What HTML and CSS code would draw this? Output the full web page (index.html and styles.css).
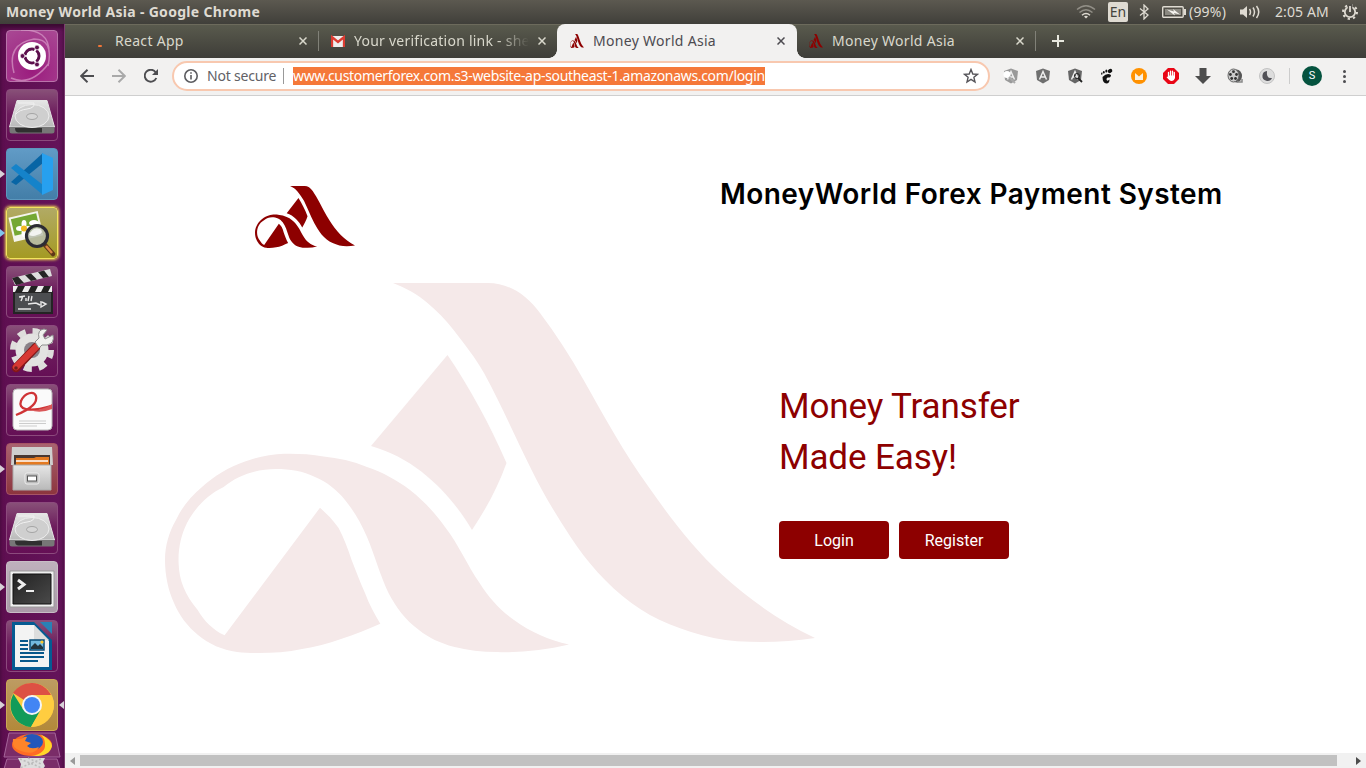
FILE: index.html
```html
<!DOCTYPE html>
<html lang="en">
<head>
<meta charset="utf-8">
<title>Money World Asia</title>
<link rel="stylesheet" href="styles.css">
</head>
<body>
<svg class="defs" width="0" height="0">
  <defs>
    <linearGradient id="steel" x1="0" y1="0" x2="0" y2="1"><stop offset="0" stop-color="#e6e6e6"/><stop offset="1" stop-color="#b9b9b9"/></linearGradient>
    <linearGradient id="dark" x1="0" y1="0" x2="1" y2="1"><stop offset="0" stop-color="#222"/><stop offset="1" stop-color="#4a4a4a"/></linearGradient>
    <symbol id="brand" viewBox="165 283 650 370" preserveAspectRatio="none">
      <path d="M393 283H488C508 283 526 294 540 313C556 334 570 356 583.6 380C604 416 624 453 648.7 487C671 519 694 549 722.4 575C751 601 780 621 815 638C797 641 779 642 761.5 642C745 642 729 641 713.7 638C683 631 654 620 631.4 603C606 584 587 562 570.6 537C556 515 543 493 531.6 470C515 437 501 404 484 373C475 357 465 345 453.6 330C446 320 437 311 427.5 303C417 294 406 288 393 283Z"/>
      <path d="M447.5 355C470 388 490 425 506.500 463C498 487 486 509 472 530C452 496 418 459 371 446Z"/>
      <path d="M569 644.500C549 640 530 632 514 620C500 610 489 598 479.600 583C467 565 459 545 445 527C435 513 423 500 410 490C397 480 382 472 367 467C353 461 338 458 323.500 456.500C311 454 297 453.500 284.400 453.700C271 454 257 457 245 461.500C229 467 214 476 202 487C191 496 182 507 176 520C169 532 165 546 165 560C165 575 168 590 174 603C179 615 187 626 198 635C209 644 222 650 237 652C244 653 251 653 258.400 653C273 653 288 652 302 649C315 647 328 643.500 341 639C355 634.500 368 629 380.300 623.700C374 613 369 604 365 593C360 582 356 571 351.600 560C348 549 344 538 338.600 528C333 520 327 514 320 507.700L224.600 635.300C213 630 204 621 197.700 610C185 595 179 580 178.600 563C178 549 181 535 187 523C195 508 207 495 223.700 487C238 475 256 469 276 469C290 469 303 471 315 477C327 482 337 490 345 500C354 511 361 523 367 537C375 556 380 575 388.500 593C396 607 405 620 419 630C429 638 441 643.500 453.600 646.700C467 650 482 652 497 652C521 653 545 650 569 644.500Z"/>
    </symbol>
    <symbol id="drive" viewBox="0 0 52 52">
      <path d="M11 11.500H41L48.500 38H3.500Z" fill="url(#steel)" stroke="#e4e4e4"/>
      <path d="M3.500 38H48.500V42Q48.500 44.500 46 44.500H6Q3.500 44.500 3.500 42Z" fill="#777"/>
      <path d="M9 39H36V43.500H12Q9 43 9 39Z" fill="#303030"/>
      <ellipse cx="26" cy="27" rx="17" ry="11.500" fill="#cfcfcf" stroke="#ededed"/>
      <ellipse cx="26" cy="27.500" rx="5.500" ry="3" fill="#d6d6d6" stroke="#a5a5a5"/>
      <path d="M12 14H28Q29 19 21 20T10 25" fill="none" stroke="#f1f1f1"/>
    </symbol>
    <symbol id="shield" viewBox="0 0 16 16"><path d="M8 .5L15 3L14 12L8 15.500L2 12L1 3Z"/><path d="M4.500 11.500L8 3.500L11.500 11.500M6 9H10" fill="none" stroke="#eee" stroke-width="1.500"/></symbol>
    <symbol id="close" viewBox="0 0 8 8"><path d="M.5.5L7.500 7.500M7.500.5L.5 7.500" fill="none" stroke="currentColor" stroke-width="1.500"/></symbol>
  </defs>
</svg>

<header class="panel">
  <span class="window-title">Money World Asia - Google Chrome</span>
  <div class="indicators">
    <svg class="wifi" width="20" height="16" viewBox="0 0 20 16" fill="none" stroke-width="1.500"><path d="M1 5.500Q10-2 19 5.500M3.500 8.500Q10 3 16.500 8.500" stroke="#918e86"/><path d="M6 11.200Q10 7.800 14 11.200" stroke="#dfdbd2"/><path d="M8 12.500Q10 11 12 12.500L10 14.500Z" fill="#dfdbd2"/></svg>
    <span class="lang">En</span>
    <svg class="bt" width="10" height="16" viewBox="0 0 10 16" fill="none" stroke="#dfdbd2" stroke-width="1.300"><path d="M1 4.500L9 11L5 15V1L9 5L1 11.500"/></svg>
    <svg class="battery" width="24" height="14" viewBox="0 0 24 14"><rect x=".7" y="1.700" width="20.500" height="10.600" rx="1" fill="none" stroke="#dfdbd2" stroke-width="1.400"/><path d="M22 4h2v6h-2z" fill="#dfdbd2"/><path d="M3 4H19V10H3Z" fill="#8b8981"/><path d="M5 4.500L12 6.500L11 4L18 9.500L12 8L13 10.500Z" fill="#f5f3ee"/></svg>
    <span class="percent">(99%)</span>
    <svg class="volume" width="20" height="16" viewBox="0 0 20 16"><path d="M0 5.500H3L7 2V14L3 10.500H0Z" fill="#dfdbd2"/><path d="M9.500 5Q11.500 8 9.500 11M13 3.500Q16 8 13 12.500M16.500 2Q21 8 16.500 14" fill="none" stroke="#dfdbd2" stroke-width="1.500"/></svg>
    <span class="clock">2:05 AM</span>
    <svg class="cog" width="16" height="16" viewBox="0 0 16 16" fill="none" stroke="#dfdbd2"><circle cx="8" cy="8" r="5.200" stroke-width="1.800"/><circle cx="8" cy="8" r="7" stroke-width="2" stroke-dasharray="2.300 3.200"/><path d="M8 0V8" stroke="#504e48" stroke-width="4.500"/><path d="M8 2V8" stroke-width="1.800"/></svg>
  </div>
</header>

<div class="desktop">
  <nav class="launcher">
    <div class="tile ubuntu"><svg viewBox="0 0 52 52"><path d="M8 43Q0 14 28 9Q48 9 42 36M5 48Q25 57 43 33M15 0Q43-1 43 22" fill="none" stroke="#d79ac8" stroke-width="1.500" opacity=".7"/><circle cx="26" cy="26" r="14" fill="#fff"/><circle cx="26" cy="26" r="7" fill="none" stroke="#5c0f4d" stroke-width="3"/><path d="M26 26L15 26M26 26L31 17M26 26L31 35" stroke="#fff" stroke-width="1.600"/><circle cx="26" cy="26" r="5.300" fill="#fff"/><g fill="#5c0f4d" stroke="#fff" stroke-width=".7"><circle cx="16.500" cy="26" r="2.400"/><circle cx="31" cy="17.500" r="2.400"/><circle cx="31" cy="34.500" r="2.400"/></g></svg></div>
    <div class="tile"><svg><use href="#drive"/></svg></div>
    <div class="tile code running"><svg viewBox="0 0 52 52"><path d="M5 34L10 37L37 15V5Z" fill="#0865a5"/><path d="M5 20L10 16L37 37V47Z" fill="#1583ca"/><path d="M36 5L47 10V42L36 47Z" fill="#27a0ef"/></svg></div>
    <div class="tile viewer active running"><svg viewBox="0 0 52 52"><g transform="rotate(-13 20 20)"><path d="M5 7H35V32H5Z" fill="#f4f4ec"/><path d="M7 9H33V26H7Z" fill="#75a833"/></g><g fill="#fff"><ellipse cx="18" cy="17" rx="2.500" ry="4"/><ellipse cx="18" cy="26" rx="2.500" ry="4"/><ellipse cx="14" cy="21.500" rx="4" ry="2.500"/><ellipse cx="22" cy="21.500" rx="4" ry="2.500"/><ellipse cx="28" cy="16" rx="5" ry="3"/></g><circle cx="18" cy="21.500" r="3" fill="#f1ba20"/><path d="M39 38L47 47" stroke="#603818" stroke-width="4.500" stroke-linecap="round"/><path d="M40 39L46 46" stroke="#db8a43" stroke-width="2.500"/><circle cx="31" cy="29" r="10.500" fill="#b8beae" fill-opacity=".85" stroke="#2c2c33" stroke-width="3.200"/><path d="M23 28Q27 19 34 22Q39 26 31 28Q27 30 23 28" fill="#fff" opacity=".8"/></svg></div>
    <div class="tile"><svg viewBox="0 0 52 52"><path d="M8 26H46V47H8Z" fill="#4b4d50" stroke="#242424" stroke-width="2"/><path d="M7 20H46V26H7Z" fill="#eee"/><path d="M12 20H19L16 26H9ZM25 20H32L29 26H22ZM38 20H45L42 26H35Z" fill="#222"/><path d="M6 12L44 3L46 10L9 19Z" fill="#ddd"/><path d="M6 12L12 10.500L18 17L10 19ZM19 9L25 7.500L31 13.500L25 15ZM32 6L38 4.500L43 11L37 12Z" fill="#252525"/><path d="M13 31L19 30M17 30L15 35M20 32V35M23 30L22 35M26 30L25 35M22 38L30 37M30 37L34 39M35 35V41L40 38L36 36M12 43H25" stroke="#e8e8e8" stroke-width="1.400" fill="none"/></svg></div>
    <div class="tile"><svg viewBox="0 0 52 52"><circle cx="26" cy="25" r="15" fill="#e3e3e1" stroke="#e3e3e1" stroke-width="3"/><circle cx="26" cy="25" r="19" fill="none" stroke="#dededc" stroke-width="6" stroke-dasharray="8 6.920"/><circle cx="26" cy="25" r="8" fill="#888188"/><path d="M10 43L30 22" stroke="#851818" stroke-width="8.500" stroke-linecap="round"/><path d="M10 42L30 22" stroke="#d73833" stroke-width="6.500" stroke-linecap="round"/><path d="M29 17L33 13Q31 5 38 4L41 5L37 10L39 14L47 10Q49 18 41 20L36 20L33 23Z" fill="#f0f0ee" stroke="#8f8f8f"/><circle cx="10" cy="43" r="1.800" fill="#702020"/></svg></div>
    <div class="tile"><svg viewBox="0 0 52 52"><rect x="7" y="5" width="39" height="41" rx="4" fill="#fafafa" stroke="#b9b9b9"/><path d="M10 31C25 25 32 19 30 12C28 7 19 8 15 17C12 25 21 29 45 22" fill="none" stroke="#cf3436" stroke-width="2.300"/><path d="M24 26Q36 27 46 20V25Q34 30 24 26" fill="#da5758"/><path d="M13 37H40M13 39.500H40M13 42H31" stroke="#ccc"/></svg></div>
    <div class="tile files running"><svg viewBox="0 0 52 52"><path d="M6 4H46L47 22H5Z" fill="#cfcfcf"/><path d="M8 12H44V24H8Z" fill="#493832"/><path d="M10 15H28L30 14H43V24H10Z" fill="#e47a21"/><path d="M10 18H42" stroke="#fff" stroke-width="1.500"/><path d="M7 22H45V47H7Z" fill="url(#steel)" stroke="#aaa"/><rect x="19" y="30" width="14" height="11" rx="2" fill="#bcbcbc" stroke="#eee"/><rect x="21.500" y="33" width="9" height="5" fill="#fff" stroke="#555"/></svg></div>
    <div class="tile"><svg><use href="#drive"/></svg></div>
    <div class="tile terminal running"><svg viewBox="0 0 52 52"><path d="M4 10H48V46H4Z" fill="#f0f0f0" stroke="#999"/><path d="M7 13H45V43H7Z" fill="url(#dark)" stroke="#111"/><path d="M12 19L18 23.500L12 28" fill="none" stroke="#eee" stroke-width="3"/><path d="M20 30H28" stroke="#eee" stroke-width="2"/></svg></div>
    <div class="tile"><svg viewBox="0 0 52 52"><path d="M34 2H46V14Z" fill="#2981b5"/><path d="M6 2H28L46 20V50H6Z" fill="#055b92"/><path d="M9 5H28L43 21V47H9Z" fill="#f3f3f3"/><path d="M28 5V20H43Z" fill="#ddd"/><path d="M14 21H22M14 25H22M14 29H22M14 33H38M14 37H38M14 41H32" stroke="#07588b" stroke-width="2"/><path d="M24 20H38V30H24Z" fill="#73b9dd" stroke="#0b4d77" stroke-width="1.500"/><path d="M25 29V27L29 23L32 26L34 24L37 27V29Z" fill="#23343c"/><circle cx="36" cy="22" r="1.600" fill="#ffc928"/></svg></div>
    <div class="tile chrome-app running focused"><svg viewBox="0 0 52 52"><circle cx="26" cy="26" r="22" fill="#ffcd40"/><path d="M26 26L7 14A22 22 0 0 1 45 16Z" fill="#dd5144"/><path d="M7.500 15A22 22 0 0 0 25 48L34 32L26 26L17 30Z" fill="#119b59"/><path d="M26 16H45Q49 22 47.500 30Q44 46 25 48L35 31Z" fill="#ffcd40"/><circle cx="26" cy="26" r="10" fill="#f5f5f5"/><circle cx="26" cy="26" r="8" fill="#4285f4"/></svg></div>
    <div class="folded"><svg viewBox="0 0 58 37"><path d="M6 1H52L57 25H1Z" fill="#7a2c68" stroke="#a5659a"/><path d="M4 27H54L57 37H1Z" fill="#7a2c68" stroke="#a5659a"/><ellipse cx="29" cy="13" rx="20" ry="11" fill="#ff6b24"/><path d="M37 2Q49 8 49 14Q47 25 29 24Q43 21 42 12Q42 6 37 2" fill="#ffd629"/><ellipse cx="29" cy="10" rx="11" ry="8" fill="#2457ba"/><path d="M10 7L18 7Q22 4 24 5L22 9L28 11L24 14Q28 18 36 15Q31 24 18 19Q8 16 10 7" fill="#ff8429"/><path d="M15 26H42L40 30L42 34L40 37H17L18 32Z" fill="#ddd"/><path d="M17 27L39 36M38 27L17 36M25 26L38 32" stroke="#bbb" stroke-width="1.500" stroke-dasharray="2 2"/></svg></div>
  </nav>

  <main class="browser">
    <div class="tabs">
      <div class="tab first"><span class="favicon spinner"><i></i></span><span class="tab-name">React App</span><svg class="x"><use href="#close"/></svg></div>
      <div class="tab second"><svg class="favicon" viewBox="0 0 14 14"><path d="M0 2H14V13H0Z" fill="#eee"/><path d="M1 13V3L7 8L13 3V13" fill="none" stroke="#dc3c32" stroke-width="2.300"/></svg><span class="tab-name fade">Your verification link - she</span><svg class="x"><use href="#close"/></svg></div>
      <div class="tab current"><svg class="favicon brand"><use href="#brand"/></svg><span class="tab-name">Money World Asia</span><svg class="x"><use href="#close"/></svg></div>
      <div class="tab last"><svg class="favicon brand"><use href="#brand"/></svg><span class="tab-name">Money World Asia</span><svg class="x"><use href="#close"/></svg></div>
      <svg class="plus" width="12" height="12" viewBox="0 0 12 12"><path d="M6 0V12M0 6H12" stroke="#e8e8df" stroke-width="2"/></svg>
    </div>
    <div class="toolbar">
      <div class="nav-buttons">
        <svg width="14" height="14" viewBox="0 0 14 14" fill="none" stroke="#4d4d50" stroke-width="1.900"><path d="M14 7H1M7.500.8L1.200 7L7.500 13.200"/></svg>
        <svg width="14" height="14" viewBox="0 0 14 14" fill="none" stroke="#a9a9a9" stroke-width="1.900"><path d="M0 7H13M6.500.8L12.800 7L6.500 13.200"/></svg>
        <svg width="14" height="14" viewBox="0 0 14 14"><path d="M12.300 9A6 6 0 1 1 11.600 3.200" fill="none" stroke="#4d4d50" stroke-width="1.900"/><path d="M14 0V6H8Z" fill="#4d4d50"/></svg>
      </div>
      <div class="address">
        <svg width="14" height="14" viewBox="0 0 14 14" fill="none" stroke="#5c5c60" stroke-width="1.600"><circle cx="7" cy="7" r="6.200"/><path d="M7 6V10.500M7 3.200V4.800"/></svg>
        <span class="security">Not secure</span><span class="rule"></span>
        <span class="url">www.customerforex.com.s3-website-ap-southeast-1.amazonaws.com/login</span>
        <svg class="star" width="16" height="16" viewBox="0 0 16 16"><path d="M8 1.500L9.800 6L14.500 6.300L10.900 9.300L12 14L8 11.400L4 14L5.100 9.300L1.500 6.300L6.200 6Z" fill="none" stroke="#555459" stroke-width="1.400"/></svg>
      </div>
      <div class="extensions">
        <svg viewBox="0 0 16 16"><use href="#shield" fill="#999"/><circle cx="4" cy="6.500" r="3.500" fill="#fff"/><path d="M6 9L12 15" stroke="#aaa" stroke-width="2"/></svg>
        <svg><use href="#shield" fill="#6f6f6f"/></svg>
        <svg viewBox="0 0 16 16"><use href="#shield" fill="#666"/><circle cx="10" cy="8" r="2.500" fill="none" stroke="#222"/><path d="M11 10L15 14" stroke="#222" stroke-width="1.800"/></svg>
        <svg viewBox="0 0 16 16" fill="#111"><ellipse cx="11" cy="3" rx="2.400" ry="2" transform="rotate(-25 11 3)"/><ellipse cx="7.300" cy="3" rx="1" ry="1.500"/><ellipse cx="4.800" cy="4.200" rx=".9" ry="1.300"/><ellipse cx="2.800" cy="5.700" rx=".7" ry="1.100"/><path d="M3.500 9Q8 4.500 12 7Q12 10 8.500 9.500Q6.500 11 8 12.500Q9 13 10.500 11.500Q10.500 15.500 7.500 15.500Q3.500 15 3.500 9Z"/></svg>
        <svg viewBox="0 0 16 16"><circle cx="8" cy="8" r="8" fill="#ff9100"/><path d="M4 5L8 8.500L12 5V12H4Z" fill="#f8f1e5"/></svg>
        <svg viewBox="0 0 16 16"><path d="M5 0H11L16 5V11L11 16H5L0 11V5Z" fill="#e90616"/><path d="M5.500 8V4.500M7.500 8V3.200M9.500 8V3.200M11.300 9V4.500" stroke="#fff" stroke-width="1.300" stroke-linecap="round"/><path d="M5 7.500H12V10Q11 13 8.500 13Q6.500 13 3.500 9L5 8.500Z" fill="#fff"/></svg>
        <svg viewBox="0 0 16 16"><path d="M4.500 0H11.500V8H16L8 16L0 8H4.500Z" fill="#4d4d4d"/></svg>
        <svg viewBox="0 0 16 16"><ellipse cx="9.500" cy="8" rx="5.500" ry="6.500" fill="#555"/><ellipse cx="6.500" cy="7.500" rx="5.500" ry="6.500" fill="#ccc" stroke="#666"/><g fill="#333"><circle cx="6.500" cy="3.700" r="1.400"/><circle cx="3.400" cy="6.500" r="1.400"/><circle cx="9.500" cy="6.500" r="1.400"/><circle cx="4.700" cy="10.500" r="1.400"/><circle cx="8.500" cy="10.500" r="1.400"/></g><path d="M10 14H15V11" stroke="#888" stroke-width="1.500" fill="none"/></svg>
        <svg viewBox="0 0 16 16"><circle cx="8" cy="8" r="7.500" fill="#ddd" stroke="#c3c3c3"/><path d="M8 3A5 5 0 1 0 13 10Q7 11 8 3Z" fill="#505056"/></svg>
      </div>
      <span class="divider"></span><span class="avatar">S</span>
      <span class="menu"><i></i><i></i><i></i></span>
    </div>

    <section class="page">
      <svg class="logo"><use href="#brand"/></svg>
      <h1>MoneyWorld Forex Payment System</h1>
      <svg class="watermark"><use href="#brand"/></svg>
      <div class="hero">
        <h2>Money Transfer<br>Made Easy!</h2>
        <div class="actions"><button>Login</button><button>Register</button></div>
      </div>
    </section>
    <div class="scrollbar"><i class="left"></i><span class="thumb"></span><i class="right"></i></div>
  </main>
</div>
</body>
</html>
```
FILE: styles.css
```css
* { box-sizing: border-box; }
body { margin: 0; width: 1366px; height: 768px; overflow: hidden; background: #fff; font-family: "Noto Sans", sans-serif; }
svg { display: block; flex: none; }
.defs { position: absolute; }

.panel { height: 24px; display: flex; align-items: center; justify-content: space-between; padding: 0 8px 0 6px; color: #dfdbd2; background: linear-gradient(#5c5950, #403f3a); font-size: 14px; white-space: nowrap; }
.window-title { font-weight: 700; letter-spacing: .31px; padding-bottom: 2px; }
.indicators { display: flex; align-items: center; }
.lang { width: 20px; height: 20px; margin: 0 11px 0 12px; border-radius: 2px; background: #dfdbd2; color: #45443e; text-align: center; line-height: 20px; }
.battery { margin-left: 13px; }
.percent { width: 38px; margin-left: 3px; padding-bottom: 2px; letter-spacing: .2px; }
.volume { margin-left: 13px; }
.clock { width: 54px; margin: 0 13px 0 15px; padding-bottom: 2px; letter-spacing: .1px; }

.desktop { display: flex; height: 744px; }
.launcher { width: 65px; flex: none; padding: 6px; display: flex; flex-direction: column; gap: 7px; background: linear-gradient(90deg, #5e0e50, #64145a); border-right: 1px solid #7d3a70; box-shadow: inset 0 4px 4px #3b0a32; }
.tile { position: relative; width: 52px; height: 52px; flex: none; border-radius: 4px; background: linear-gradient(#885078, #6d1c5d 48%, #650f55); border: 1px solid #8c4a7d; }
.tile svg { width: 52px; height: 52px; margin: -1px; }
.ubuntu { background: radial-gradient(circle at 50% 80%, #9b1c7e, #a94994); border-color: #b974aa; }
.code { background: linear-gradient(#619bc6, #437ea8); border-color: #5c97bd; }
.viewer { background: linear-gradient(#b1aa65, #a49a23); }
.active { border: 1px solid #f2e45e; box-shadow: 0 0 3px 1px #f3de54; }
.files { background: linear-gradient(#a96370, #8c353e); border-color: #a75365; }
.terminal { background: linear-gradient(#bfb1bd, #aa9aa8); border-color: #c8bdc6; }
.chrome-app { background: linear-gradient(#bd9b62, #b2893a); border-color: #cba856; }
.running::before, .focused::after { content: ""; position: absolute; top: 21px; left: -7px; border: 4px solid transparent; border-left: 5px solid #d8d1d8; border-right: 0; }
.active::before { border-left-color: #80c6ec; }
.focused::after { left: auto; right: -7px; border-left: 0; border-right: 5px solid #d8d1d8; }
.folded { width: 58px; margin: -6px 0 0 -3px; }
.folded svg { width: 58px; height: 37px; }

.browser { width: 1301px; display: flex; flex-direction: column; }
.tabs { height: 34px; display: flex; align-items: center; background: linear-gradient(#5a5b4e, #3e3d38); box-shadow: inset 0 1px #6c6a5c; color: #d9d8cc; font-size: 14px; }
.tab { position: relative; height: 34px; display: flex; align-items: center; padding-right: 11px; }
.tab .x { width: 8px; height: 8px; margin-left: auto; }
.tab-name { white-space: nowrap; overflow: hidden; letter-spacing: .3px; padding-bottom: 1px; }
.favicon { width: 14px; height: 14px; margin-right: 9px; flex: none; fill: #8d0000; }
.first { width: 253px; padding-left: 26px; }
.first::after, .last::after { content: ""; position: absolute; right: 0; top: 7px; height: 20px; border-right: 1px solid #818178; }
.first::after { right: -1px; }
.spinner { padding: 11px 0 0 7px; width: 14px; margin-right: 10px; }
.spinner i { display: block; width: 4px; height: 2px; background: #f37637; border-radius: 2px; }
.second { width: 239px; padding-left: 13px; }
.fade { width: 175px; letter-spacing: .24px; -webkit-mask-image: linear-gradient(90deg, #000 82%, transparent); mask-image: linear-gradient(90deg, #000 82%, transparent); }
.current { width: 240px; padding-left: 13px; padding-right: 12px; border-radius: 8px 8px 0 0; background: #f2f1f0; color: #4d4b50; }
.current::before, .current::after { content: ""; position: absolute; bottom: 0; width: 8px; height: 8px; }
.current::before { left: -8px; background: radial-gradient(circle at 0 0, transparent 7.5px, #f2f1f0 8px); }
.current::after { right: -8px; background: radial-gradient(circle at 100% 0, transparent 7.5px, #f2f1f0 8px); }
.last { width: 239px; padding-left: 12px; padding-right: 12px; }
.plus { margin-left: 16px; }
.toolbar { height: 38px; flex: none; display: flex; align-items: center; padding-bottom: 1px; background: #f2f1f0; border-bottom: 1px solid #cfcfcf; }
.nav-buttons { width: 107px; padding-left: 15px; display: flex; gap: 18px; }
.address { width: 818px; height: 30px; border: 2px solid #f8c8af; border-radius: 15px; background: #fff; padding: 0 9px 0 10px; display: flex; align-items: center; font-size: 14px; white-space: nowrap; }
.security { width: 69px; margin-left: 9px; padding-bottom: 1px; color: #626166; letter-spacing: -.2px; }
.rule { width: 1px; height: 16px; margin: 0 9px 0 7px; background: #999; }
.url { width: 472px; height: 18px; line-height: 17px; background: #f57839; color: #fff; letter-spacing: -.32px; overflow: hidden; }
.star { margin-left: auto; }
.extensions { display: flex; gap: 16px; margin-left: 13px; }
.extensions svg { width: 16px; height: 16px; }
.divider { width: 1px; height: 16px; margin: 0 12px 0 14px; background: #ccc; }
.avatar { width: 20px; height: 20px; border-radius: 50%; background: #05533f; color: #fff; font: 11px/20px Roboto, sans-serif; text-align: center; }
.menu { display: flex; flex-direction: column; gap: 2px; margin-left: 21px; }
.menu i { width: 3px; height: 3px; border-radius: 50%; background: #4d4d50; }

.page { height: 657px; flex: none; display: grid; grid-template: 187px 470px / 655px 1fr; overflow: hidden; }
.logo { width: 100px; height: 62px; margin: 90px 0 0 190px; fill: #8d0000; }
h1 { margin: 80px 0 0; font: 600 28px/36px Inter, sans-serif; letter-spacing: .43px; white-space: nowrap; color: #000; }
.watermark { width: 650px; height: 370px; margin-left: 100px; fill: #f5e9e9; }
.hero { padding: 98px 0 0 59px; }
h2 { margin: 0; font: 400 35px/51px Roboto, sans-serif; letter-spacing: -.12px; color: #8d0000; }
.actions { display: flex; gap: 10px; margin-top: 38px; }
button { width: 110px; height: 38px; padding: 0; border: 0; border-radius: 4px; background: #8d0000; color: #fff; font: 16px Roboto, sans-serif; }
.scrollbar { height: 15px; flex: none; display: flex; align-items: center; padding: 0 5px; background: #f1f1f1; }
.left, .right { border: 4px solid transparent; }
.left { border-left: 0; border-right: 5px solid #999; }
.thumb { width: 1257px; height: 11px; margin-left: 5px; background: #c1c1c1; }
.right { margin-left: auto; border-right: 0; border-left: 5px solid #4c4c4c; }
```
